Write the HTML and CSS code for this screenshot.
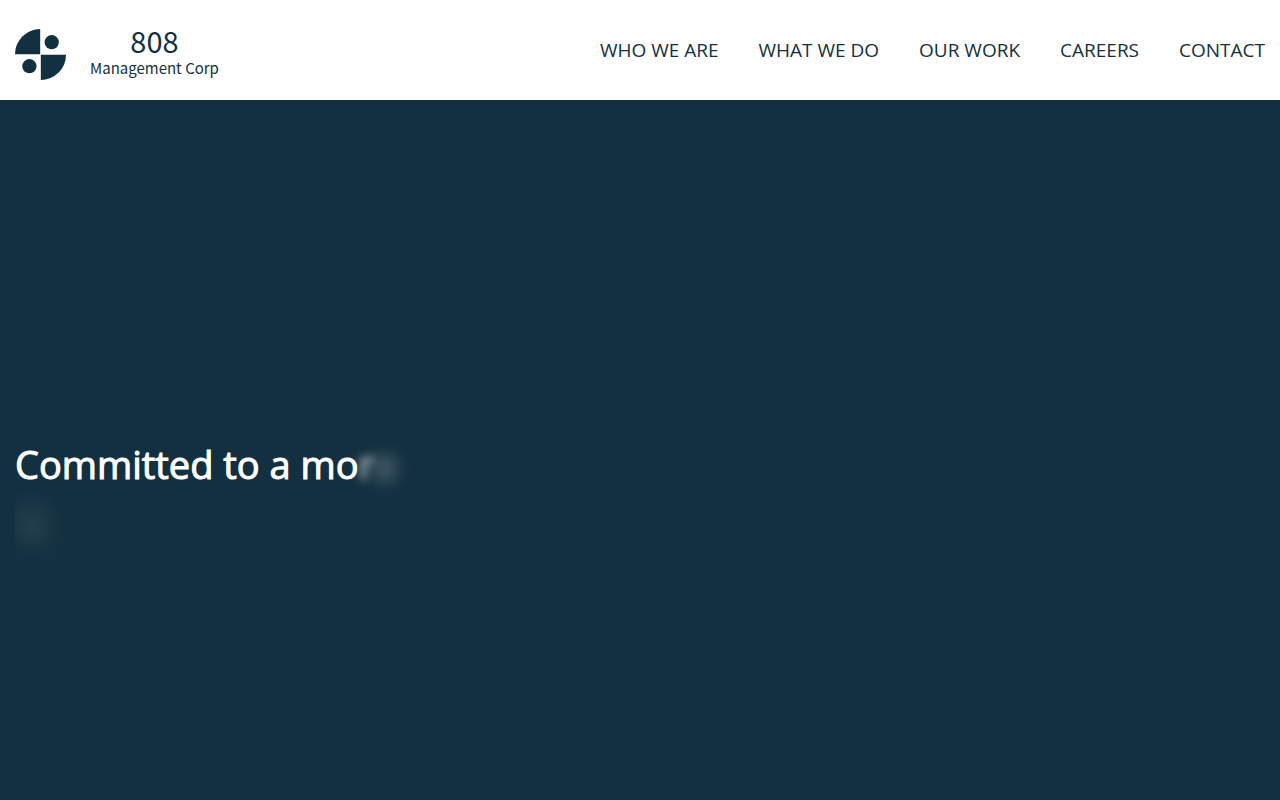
FILE: index.html
```html
<!DOCTYPE html>
<html lang="en">
<head>
    <meta charset="UTF-8">
    <meta name="viewport" content="width=device-width, initial-scale=1.0">
    <title>808 Management Corp</title>
    <link rel="stylesheet" href="styles.css">
</head>
<body>
    <header class="header">
        <a class="logo" href="#">
            <svg class="logo-mark" viewBox="0 0 51 51" aria-hidden="true">
                <path d="M25.2 0V25.2H0A25.2 25.2 0 0 1 25.2 0Z"/>
                <path d="M25.8 51V25.8H51A25.2 25.2 0 0 1 25.8 51Z"/>
                <circle cx="36.7" cy="13.2" r="7.1"/>
                <circle cx="14.4" cy="37.2" r="7.1"/>
            </svg>
            <span class="logo-text">
                <span class="logo-number">808</span>
                <span class="logo-name">Management Corp</span>
            </span>
        </a>
        <nav class="nav">
            <a href="#">WHO WE ARE</a>
            <a href="#">WHAT WE DO</a>
            <a href="#">OUR WORK</a>
            <a href="#">CAREERS</a>
            <a href="#">CONTACT</a>
        </nav>
    </header>
    <main class="hero">
        <h1 class="hero-title">
            <span class="line">Committed to a mo<span class="fade-1">r</span><span class="fade-2">e</span></span>
            <span class="line line-next"><span class="fade-3">s</span></span>
        </h1>
    </main>
</body>
</html>
```
FILE: styles.css
```css
* {
    box-sizing: border-box;
}

body {
    display: flex;
    flex-direction: column;
    min-height: 100vh;
    margin: 0;
    font-family: "Open Sans", "Noto Sans", sans-serif;
    color: #133040;
    background-color: #133040;
}

.header {
    display: flex;
    justify-content: space-between;
    align-items: center;
    height: 100px;
    padding: 0 15px;
    background-color: white;
}

.header a {
    color: #133040;
    text-decoration: none;
}

.logo {
    display: flex;
    align-items: center;
    gap: 24px;
    padding-top: 8px;
}

.logo-mark {
    width: 51px;
    height: 51px;
    fill: #133040;
}

.logo-text {
    display: flex;
    flex-direction: column;
    align-items: center;
    padding-bottom: 4px;
    font-family: "Noto Sans CJK SC", sans-serif;
}

.logo-number {
    font-size: 29px;
    line-height: 32px;
}

.logo-name {
    font-size: 15px;
    line-height: 24px;
}

.nav {
    display: flex;
    gap: 40px;
    font-size: 19px;
    line-height: 24px;
}

.hero {
    display: flex;
    flex: 1;
    align-items: center;
    padding: 88px 15px 0;
}

.hero-title {
    margin: 0;
    font-size: 38px;
    font-weight: 500;
    line-height: 54px;
    color: white;
    -webkit-text-stroke: 1px white;
}

.line {
    display: block;
}

.line-next {
    clip-path: inset(-20px -40px -20px 0);
}

/* letters that are still fading in */
.fade-1,
.fade-2,
.fade-3 {
    display: inline-block;
}

.fade-1 {
    opacity: 0.7;
    filter: blur(5px);
}

.fade-2 {
    opacity: 0.5;
    filter: blur(9px);
}

.fade-3 {
    padding-left: 4px;
    font-size: 54px;
    opacity: 0.3;
    filter: blur(14px);
}
```
